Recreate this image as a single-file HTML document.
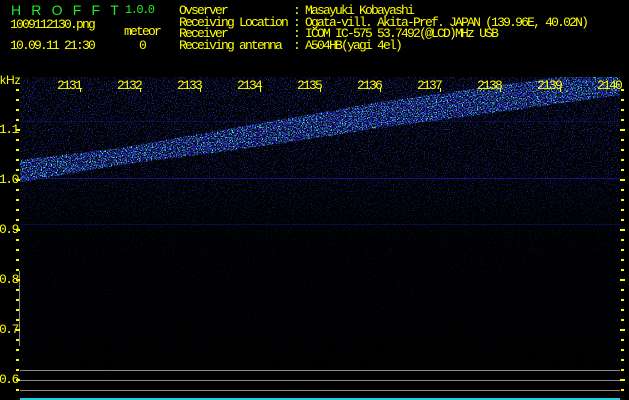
<!DOCTYPE html>
<html><head><meta charset="utf-8"><style>
body{margin:0;background:#000;width:629px;height:400px;overflow:hidden;position:relative;font-family:"Liberation Mono",monospace;}
.t{position:absolute;color:#ff0;font-size:13px;line-height:12px;white-space:pre;letter-spacing:-1.8px}
.g{color:#2e2;}
.y{letter-spacing:-1.5px;font-size:13px}
</style></head><body>
<svg width="629" height="400" style="position:absolute;left:0;top:0">
<defs>
<filter id="n" x="0" y="0" width="100%" height="100%">
<feTurbulence type="fractalNoise" baseFrequency="0.95" numOctaves="1" seed="3"/>
<feColorMatrix type="matrix" values="0 0 0 0 0.02  0 0 0 0 0.05  0 3 0 0 -0.7  9 0 0 0 -5.2"/>
</filter>
<filter id="b" x="0" y="0" width="100%" height="100%">
<feTurbulence type="fractalNoise" baseFrequency="0.8" numOctaves="1" seed="7"/>
<feColorMatrix type="matrix" values="0 0 0 0 0.05  0 5 0 0 -2.2  0 0 0 0 1  9 0 0 0 -4.3"/>
</filter>
<linearGradient id="fade" x1="0" y1="0" x2="0" y2="1">
<stop offset="0" stop-color="#fff" stop-opacity="1"/>
<stop offset="0.3" stop-color="#fff" stop-opacity="0.7"/>
<stop offset="0.5" stop-color="#fff" stop-opacity="0.2"/>
<stop offset="1" stop-color="#fff" stop-opacity="0.03"/>
</linearGradient>
<mask id="m"><rect x="20" y="77" width="600" height="322" fill="url(#fade)"/></mask>
<clipPath id="band"><polygon points="20,160 120,148 250,125 380,102 500,85 560,77 620,77 620,95 500,112 380,128 250,148 120,165 20,182"/></clipPath>
</defs>
<g mask="url(#m)"><rect x="20" y="77" width="600" height="322" filter="url(#n)"/></g>
<g clip-path="url(#band)"><rect x="20" y="77" width="600" height="110" filter="url(#b)"/></g>
<line x1="20" y1="178.5" x2="620" y2="178.5" stroke="#22f" stroke-opacity="0.5"/>
<line x1="20" y1="121.5" x2="620" y2="121.5" stroke="#22c" stroke-opacity="0.3"/>
<line x1="20" y1="224.5" x2="620" y2="224.5" stroke="#22c" stroke-opacity="0.3"/>
<g stroke="#888"><line x1="20" y1="370.5" x2="620" y2="370.5"/><line x1="20" y1="380.5" x2="620" y2="380.5"/><line x1="20" y1="390.5" x2="620" y2="390.5"/><line x1="19.5" y1="271" x2="19.5" y2="346"/></g>
<rect x="20" y="398" width="600" height="2" fill="#2cd"/>
<g stroke="#ff0" stroke-width="2">
<path d="M16 90h3M16 100h3M16 110h3M16 120h3M16 130h4M16 140h3M16 150h3M16 160h3M16 170h3M16 180h4M16 190h3M16 200h3M16 210h3M16 220h3M16 230h4M16 240h3M16 250h3M16 260h3M16 270h3M16 280h4M16 290h3M16 300h3M16 310h3M16 320h3M16 330h4M16 340h3M16 350h3M16 360h3M16 370h3M16 380h4M16 390h3"/>
<path d="M621 90h3M621 100h3M621 110h3M621 120h3M620 130h5M621 140h3M621 150h3M621 160h3M621 170h3M620 180h5M621 190h3M621 200h3M621 210h3M621 220h3M620 230h5M621 240h3M621 250h3M621 260h3M621 270h3M620 280h5M621 290h3M621 300h3M621 310h3M621 320h3M620 330h5M621 340h3M621 350h3M621 360h3M621 370h3M620 380h5M621 390h3"/>
</g>
<g stroke="#ff0" stroke-width="1"><path d="M80.5 88v4M140.5 88v4M200.5 88v4M260.5 88v4M320.5 88v4M380.5 88v4M440.5 88v4M500.5 88v4M560.5 88v4"/></g>
</svg>
<div class="t g" style="left:11px;top:4px;font-size:14px;letter-spacing:10.2px;font-family:'Liberation Sans',sans-serif">HROFFT</div>
<div class="t g" style="left:125px;top:4px;font-size:12px;letter-spacing:-1.5px">1.0.0</div>
<div class="t" style="left:10px;top:19px">1009112130.png</div>
<div class="t" style="left:124px;top:26px">meteor</div>
<div class="t" style="left:10px;top:40px">10.09.11 21:30</div>
<div class="t" style="left:139px;top:40px">0</div>
<div class="t" style="left:179px;top:5px;line-height:11.7px">Ovserver           : Masayuki Kobayashi
Receiving Location : Ogata-vill. Akita-Pref. JAPAN (139.96E, 40.02N)
Receiver           : ICOM IC-575 53.7492(@LCD)MHz USB
Receiving antenna  : A504HB(yagi 4el)</div>
<div class="t" style="left:0;top:74px;font-family:'Liberation Sans',sans-serif;letter-spacing:0;font-size:12px">kHz</div>
<div class="t y" style="left:-1px;top:124px">1.1</div>
<div class="t y" style="left:-1px;top:174px">1.0</div>
<div class="t y" style="left:-1px;top:224px">0.9</div>
<div class="t y" style="left:-1px;top:274px">0.8</div>
<div class="t y" style="left:-1px;top:324px">0.7</div>
<div class="t y" style="left:-1px;top:374px">0.6</div>
<div class="t" style="left:57px;top:80px">2131</div>
<div class="t" style="left:117px;top:80px">2132</div>
<div class="t" style="left:177px;top:80px">2133</div>
<div class="t" style="left:237px;top:80px">2134</div>
<div class="t" style="left:297px;top:80px">2135</div>
<div class="t" style="left:357px;top:80px">2136</div>
<div class="t" style="left:417px;top:80px">2137</div>
<div class="t" style="left:477px;top:80px">2138</div>
<div class="t" style="left:537px;top:80px">2139</div>
<div class="t" style="left:597px;top:80px">2140</div>
</body></html>
